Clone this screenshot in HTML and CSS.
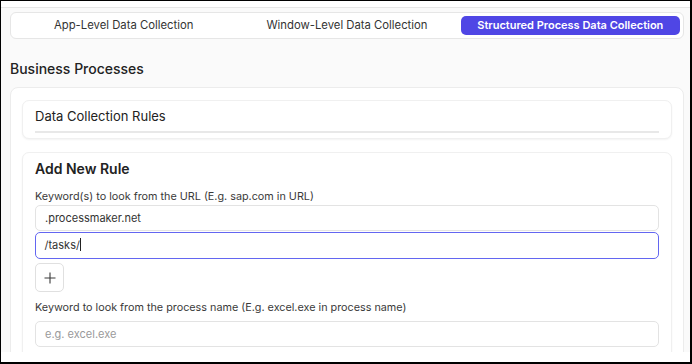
FILE: index.html
```html
<!DOCTYPE html>
<html lang="en">
<head>
    <meta charset="UTF-8">
    <meta name="viewport" content="width=device-width, initial-scale=1.0">
    <title>Business Processes</title>
    <link rel="stylesheet" href="styles.css">
</head>
<body>
    <div class="frame">
        <div class="page">
            <div class="tabs">
                <div class="tab">App-Level Data Collection</div>
                <div class="tab">Window-Level Data Collection</div>
                <div class="tab active">Structured Process Data Collection</div>
            </div>

            <h2 class="section-title">Business Processes</h2>

            <div class="outer-card">
                <div class="card rules-card">
                    <div class="card-title">Data Collection Rules</div>
                    <div class="divider"></div>
                </div>

                <div class="card">
                    <h3 class="card-heading">Add New Rule</h3>

                    <label class="field-label">Keyword(s) to look from the URL (E.g. sap.com in URL)</label>
                    <div class="input">.processmaker.net</div>
                    <div class="input focused">/tasks/<span class="caret"></span></div>
                    <button class="add-btn" type="button">
                        <svg width="12" height="12" viewBox="0 0 12 12">
                            <path d="M6 0.5V11.5M0.5 6H11.5" stroke="#3a3a3a" stroke-width="1.1" fill="none"/>
                        </svg>
                    </button>

                    <label class="field-label second">Keyword to look from the process name (E.g. excel.exe in process name)</label>
                    <div class="input placeholder">e.g. excel.exe</div>
                </div>
            </div>
        </div>
    </div>
</body>
</html>
```

FILE: styles.css
```css
* {
    box-sizing: border-box;
}
body {
    margin: 0;
    font-family: Inter, "Noto Sans", sans-serif;
    color: #2b2b2b;
    background: #fff;
}
.frame {
    width: 692px;
    height: 364px;
    border: 1px solid #000;
    border-right-width: 2px;
    border-bottom-width: 2px;
    overflow: hidden;
    background: #fff;
}
.page {
    margin-top: 6px;
    height: 345px;
    border-top: 1px solid #e6e6e6;
    background: #fafafa;
    padding: 4px 6px 0 9px;
    overflow: hidden;
}
.tabs {
    display: grid;
    grid-template-columns: repeat(3, 1fr);
    gap: 4px;
    padding: 3px;
    background: #fff;
    border: 1px solid #e6e6e6;
    border-radius: 6px;
}
.tab {
    height: 19px;
    line-height: 19px;
    text-align: center;
    font-size: 11.3px;
    color: #333;
    border-radius: 5px;
}
.tab.active {
    background: #4f46e5;
    color: #fff;
    font-weight: 600;
    font-size: 11px;
}
.section-title {
    margin: 0;
    padding-top: 20px;
    height: 48px;
    font-size: 14px;
    line-height: 20px;
    font-weight: 500;
    color: #222;
}
.outer-card {
    background: #fff;
    border: 1px solid #ececec;
    border-radius: 8px;
    padding: 12px 11px;
    height: 400px;
}
.card {
    background: #fff;
    border: 1px solid #f0f0f0;
    border-radius: 7px;
    box-shadow: 0 1px 2px rgba(0, 0, 0, 0.05);
    padding: 7px 12px 12px;
}
.rules-card {
    padding-bottom: 5px;
    margin-bottom: 13px;
}
.card-title {
    font-size: 13px;
    line-height: 16px;
    color: #222;
}
.divider {
    margin-top: 7px;
    height: 2px;
    background: #e8e8e8;
}
.card-heading {
    margin: 0 0 12px;
    font-size: 14px;
    line-height: 18px;
    font-weight: 600;
    color: #222;
}
.field-label {
    display: block;
    font-size: 10.8px;
    line-height: 14px;
    color: #3a3a3a;
    margin-bottom: 1px;
}
.field-label.second {
    margin-top: 9px;
    margin-bottom: 6px;
}
.input {
    height: 26px;
    line-height: 24px;
    border: 1px solid #e3e3e3;
    border-radius: 5px;
    padding: 0 9px;
    font-size: 11px;
    color: #333;
    margin-bottom: 1px;
    background: #fff;
}
.input.focused {
    height: 27px;
    border: 1.5px solid #6366f1;
    padding-left: 8.5px;
}
.input.placeholder {
    color: #9a9a9a;
}
.caret {
    display: inline-block;
    width: 1px;
    height: 13px;
    background: #222;
    vertical-align: -2px;
}
.add-btn {
    display: flex;
    align-items: center;
    justify-content: center;
    margin-top: 4px;
    width: 29px;
    height: 29px;
    padding: 0;
    background: #fff;
    border: 1px solid #e0e0e0;
    border-radius: 5px;
}
```
